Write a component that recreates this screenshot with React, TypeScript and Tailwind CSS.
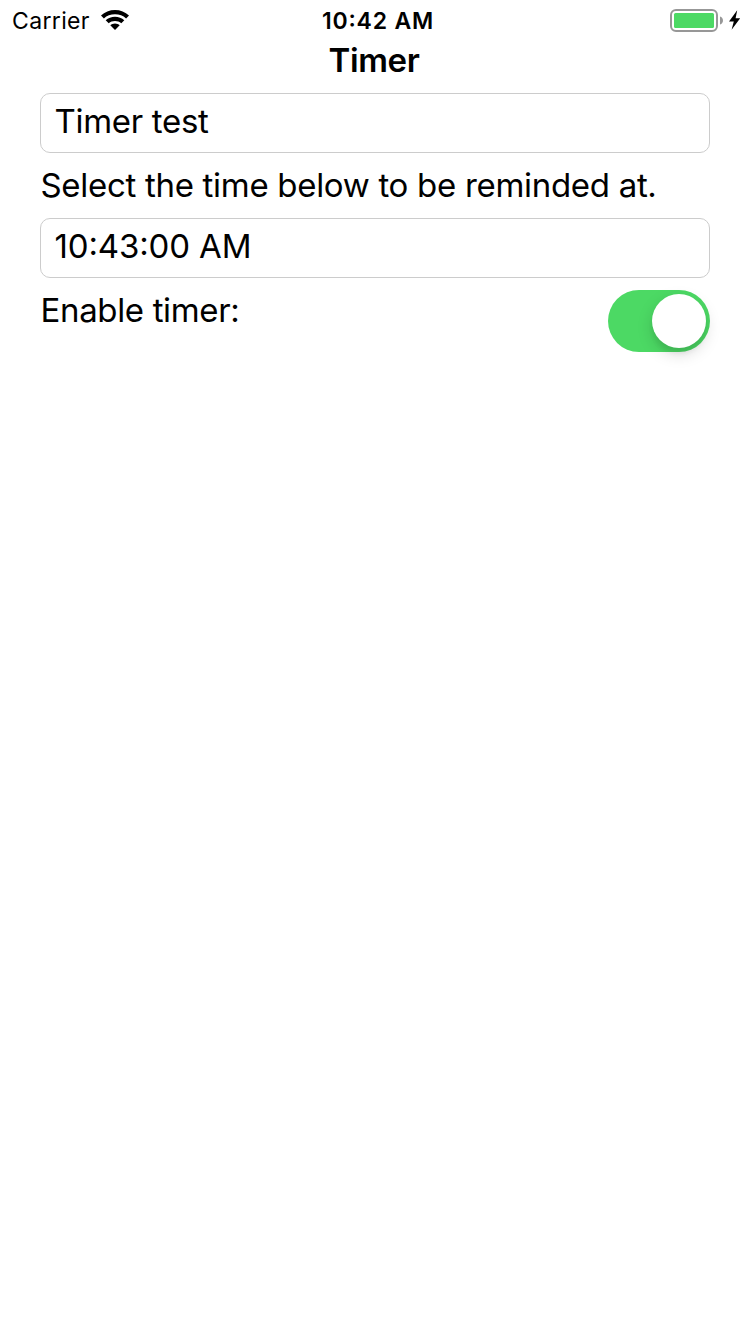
import React, { useState } from "react";

function Field({ value, className }: { value: string; className?: string }) {
  return (
    <div className="flex h-[60px] items-center rounded-[10px] border border-[#cccccc] pb-[3px] pl-[13.5px] leading-none">
      <span className={`whitespace-nowrap ${className ?? ""}`}>{value}</span>
    </div>
  );
}

function WifiIcon() {
  return (
    <svg width="28" height="21" viewBox="0 0 28 21">
      <path d="M14 0C8.600 0 3.700 2 0 5.500L2.900 8.400C5.800 5.700 9.700 4.300 14 4.300S22.200 5.700 25.100 8.400L28 5.500C24.300 2 19.400 0 14 0Z" />
      <path d="M14 6.700C10.400 6.700 7.200 8 4.700 10.200L7.700 13.200C9.400 11.800 11.600 11 14 11S18.600 11.800 20.300 13.200L23.300 10.200C20.800 8 17.600 6.700 14 6.700Z" />
      <path d="M14 13.400C12.200 13.400 10.600 14.100 9.300 15.200L14 20L18.700 15.200C17.400 14.100 15.800 13.400 14 13.400Z" />
    </svg>
  );
}

function BatteryIcon() {
  return (
    <svg width="70" height="23" viewBox="0 0 70 23">
      <rect x="1" y="1" width="46" height="21" rx="5" fill="none" stroke="#979797" strokeWidth="2" />
      <rect x="4" y="4" width="40" height="15" rx="1.500" fill="#4cd964" />
      <path d="M50 7.500C51.800 8 53 9.600 53 11.500S51.800 15 50 15.500Z" fill="#979797" />
      <path d="M67.200 1.300L59 12.600H63.800L61.600 20.700L70.200 9.200H65.600Z" fill="#000" />
    </svg>
  );
}

export default function App() {
  const [enabled, setEnabled] = useState(true);
  return (
    <main className="flex h-[1334px] w-[750px] flex-col overflow-hidden bg-white font-['Inter',sans-serif] text-black">
      <header className="grid h-10 grid-cols-3 items-center pt-px pr-[10px] pl-3 text-[23px] leading-none">
        <div className="flex items-center gap-[11px]">
          <span className="pt-px tracking-[0.35px]">Carrier</span>
          <WifiIcon />
        </div>
        <span className="pt-px pl-1 text-center font-semibold tracking-[0.8px] [font-feature-settings:'case']">10:42 AM</span>
        <div className="flex justify-end">
          <BatteryIcon />
        </div>
      </header>
      <h1 className="pr-[2px] text-center text-[33px] leading-[40px] font-semibold tracking-[-0.35px]">Timer</h1>
      <section className="flex flex-col px-10 pt-[13px] text-[33px] tracking-[-0.3px]">
        <Field value="Timer test" />
        <p className="h-[65px] pl-[0.5px] leading-[65px]">Select the time below to be reminded at.</p>
        <Field value="10:43:00 AM" className="tracking-[-0.15px] [font-feature-settings:'case']" />
        <div className="flex items-start justify-between pt-3">
          <span className="pl-[0.5px] leading-[41px] tracking-[-0.35px]">Enable timer:</span>
          <button
            type="button"
            role="switch"
            aria-checked={enabled}
            aria-label="Enable timer"
            onClick={() => setEnabled(!enabled)}
            className={`flex h-[62px] w-[102px] items-center rounded-full px-1 ${enabled ? "justify-end bg-[#4cd964]" : "justify-start bg-[#e5e5e5]"}`}
          >
            <span className="size-[54px] rounded-full bg-white shadow-[0_6px_16px_rgba(0,0,0,0.15),0_6px_4px_rgba(0,0,0,0.05)]" />
          </button>
        </div>
      </section>
    </main>
  );
}
